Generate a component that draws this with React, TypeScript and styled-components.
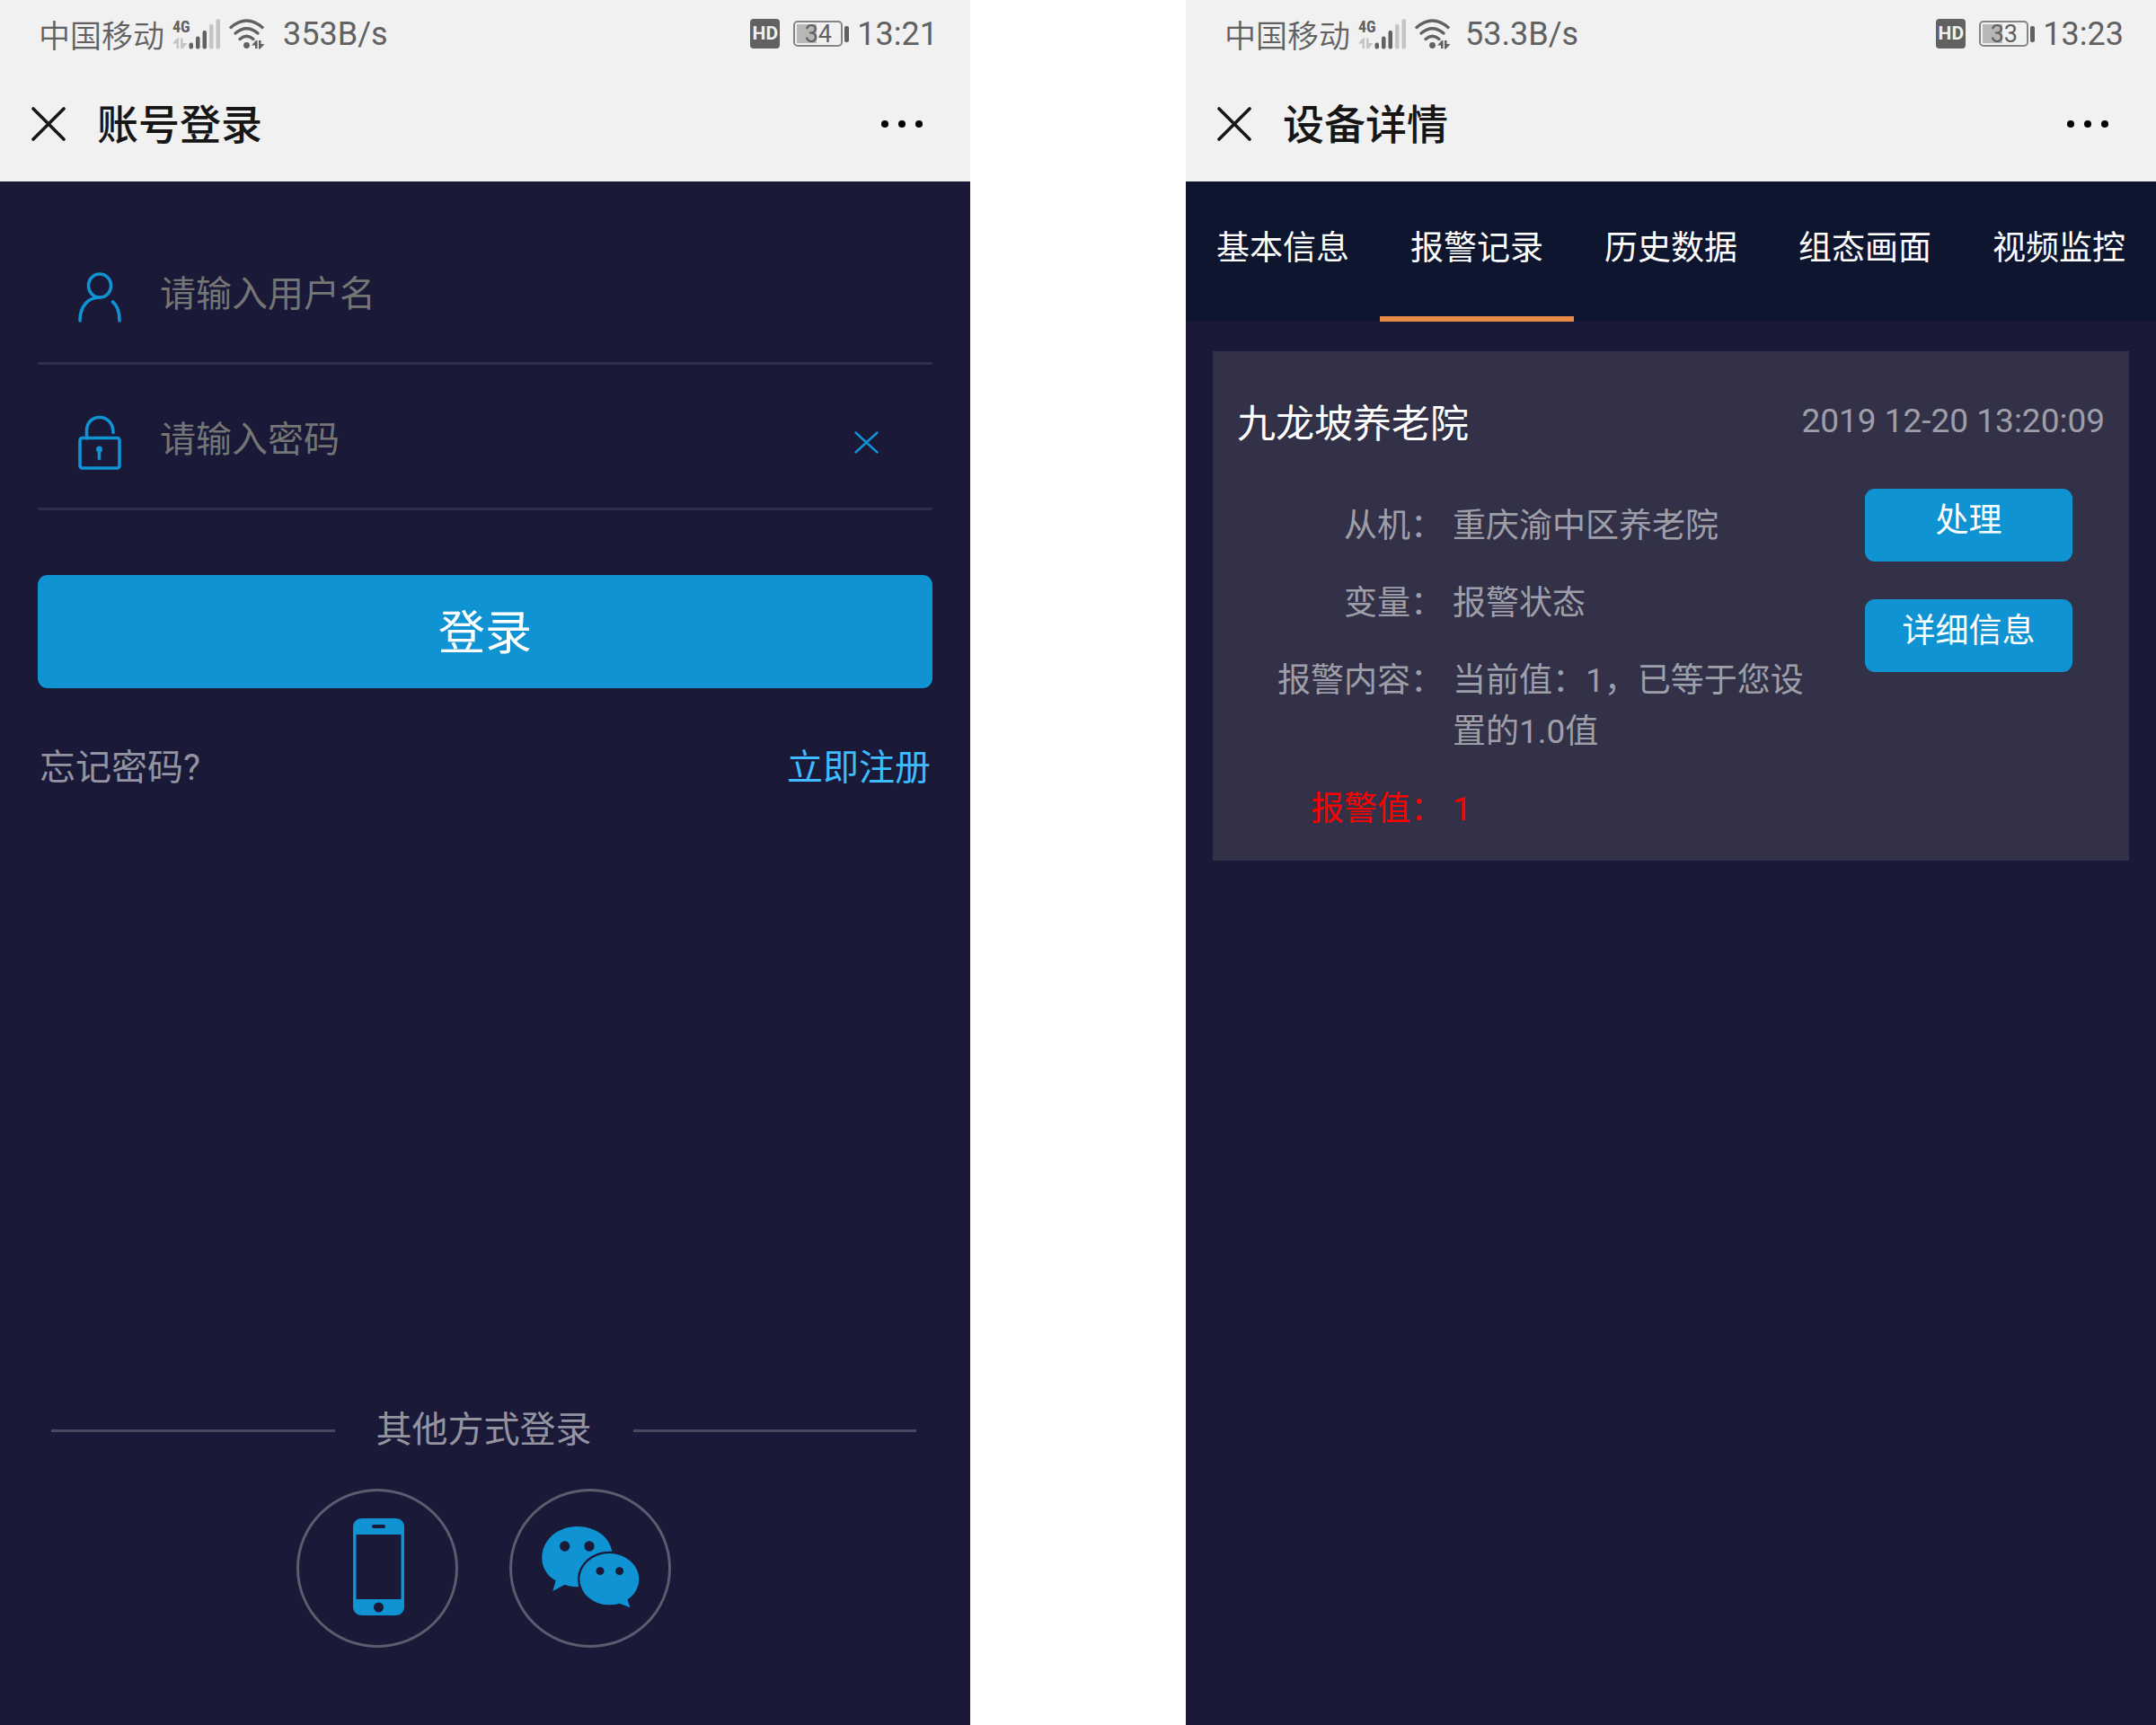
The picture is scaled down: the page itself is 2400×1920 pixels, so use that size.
import React from "react";
import styled, { createGlobalStyle } from "styled-components";

const color = {
  bar: "#f1f1f1",
  status: "#616161",
  faint: "#c5c5c5",
  ink: "#161616",
  screen: "#1a1937",
  tabs: "#0e152e",
  card: "#323148",
  blue: "#0f93d3",
  link: "#3dbdff",
  orange: "#e98948",
  muted: "rgba(255, 255, 255, 0.54)",
};

const GlobalStyle = createGlobalStyle`
  *, *::before, *::after { box-sizing: border-box; }
  body {
    margin: 0;
    background: #fff;
    font-family: Roboto, "Noto Sans CJK SC", sans-serif;
  }
  button, input { font: inherit; color: inherit; border: 0; padding: 0; background: none; }
  button { cursor: pointer; }
  svg { display: block; flex: none; }
  h1, h2, dl, dd { margin: 0; font-weight: 400; }
`;

const Board = styled.div`
  display: flex;
  gap: 10%;
  min-height: 100vh;
`;

const Phone = styled.section`
  flex: 1;
  min-width: 0;
  display: flex;
  flex-direction: column;
  background: ${color.screen};
`;

/* ---------- system status bar ---------- */

const StatusBar = styled.div`
  display: flex;
  align-items: center;
  height: 74px;
  padding: 1px 36px 0 43px;
  background: ${color.bar};
  color: ${color.status};
  font-size: 36px;
  line-height: 42px;
`;

const Carrier = styled.span`
  font-family: "Noto Sans CJK SC", sans-serif;
  font-size: 35px;
  font-weight: 350;
  margin-right: 9px;
`;

const Speed = styled.span`
  margin-left: ${(p: { $gap: number }) => p.$gap}px;
`;

const StatusRight = styled.div`
  display: flex;
  align-items: center;
  margin-left: auto;
`;

const HdBadge = styled.span`
  width: 33px;
  height: 33px;
  margin-right: 15px;
  border-radius: 4px;
  background: ${color.status};
  color: ${color.bar};
  font-size: 21px;
  font-weight: 700;
  line-height: 33px;
  text-align: center;
`;

const Battery = styled.span`
  display: flex;
  align-items: center;
  gap: 2px;
  margin-right: 9px;

  &::after {
    content: "";
    width: 5px;
    height: 18px;
    border-radius: 2px;
    background: ${color.status};
  }
`;

const BatteryCell = styled.span`
  width: 55px;
  height: 29px;
  border: 2px solid #858585;
  border-radius: 5px;
  padding: 2px;
  background: linear-gradient(#b7b7b7, #b7b7b7) 2px 2px / 22px 21px no-repeat;
  font-size: 27px;
  line-height: 22px;
  text-align: center;
`;

const SignalSvg = styled.svg`
  overflow: visible;
`;

function SignalIcon() {
  return (
    <SignalSvg width="54" height="42" viewBox="0 -4 54 42" aria-hidden="true">
      <text
        x="0"
        y="15"
        fill={color.status}
        fontFamily='"Roboto Condensed", "Liberation Sans Narrow", Roboto, sans-serif'
        fontSize="18"
        fontWeight="700"
      >
        4G
      </text>
      <g fill={color.faint}>
        <path d="M0 27.500L5 21.500H7V33H4.500V27.500Z" />
        <path d="M9 21.500H11.500V27H16.500L11.500 33H9Z" />
        <rect x="41" y="6" width="4.500" height="27.500" rx="2" />
        <rect x="48.500" y="0" width="4.500" height="33.500" rx="2" />
      </g>
      <g fill={color.status}>
        <rect x="18.500" y="26.500" width="4.500" height="7" rx="2" />
        <rect x="26" y="19.500" width="4.500" height="14" rx="2" />
        <rect x="33.500" y="13" width="4.500" height="20.500" rx="2" />
      </g>
    </SignalSvg>
  );
}

const WifiSvg = styled.svg`
  margin-left: 9px;
`;

function WifiIcon() {
  return (
    <WifiSvg width="40" height="34" viewBox="0 0 40 34" aria-hidden="true">
      <g fill="none" stroke={color.status} strokeWidth="3.400" strokeLinecap="round">
        <path d="M2 9.500Q19.500 -5.500 37 9.500" />
        <path d="M7 16Q19.500 5.500 32 16" />
        <path d="M12 22.500Q19.500 16 27 22.500" />
      </g>
      <g fill={color.status}>
        <circle cx="19.500" cy="29.500" r="3.400" />
        <path d="M25 29.500L30 24H31.500V33H29V29.500Z" />
        <path d="M33 24H35.500V28H39.500L34.500 33.500H33Z" />
      </g>
    </WifiSvg>
  );
}

/* ---------- title bar ---------- */

const TitleBar = styled.header`
  display: flex;
  align-items: center;
  height: 128px;
  padding: 0 53px 0 35px;
  background: ${color.bar};
  color: ${color.ink};
`;

const Title = styled.h1`
  padding-top: 2px;
  margin-left: 35px;
  font-size: 46px;
  font-weight: 500;
  line-height: 60px;
`;

const MoreButton = styled.button`
  margin-left: auto;
`;

type ChromeProps = { speed: string; speedGap: number; battery: number; time: string; title: string };

function PhoneChrome({ speed, speedGap, battery, time, title }: ChromeProps) {
  return (
    <>
      <StatusBar>
        <Carrier>中国移动</Carrier>
        <SignalIcon />
        <WifiIcon />
        <Speed $gap={speedGap}>{speed}</Speed>
        <StatusRight>
          <HdBadge>HD</HdBadge>
          <Battery>
            <BatteryCell>{battery}</BatteryCell>
          </Battery>
          <span>{time}</span>
        </StatusRight>
      </StatusBar>
      <TitleBar>
        <button type="button" aria-label="关闭">
          <svg width="38" height="38" viewBox="0 0 38 38">
            <path d="M2 2L36 36M36 2L2 36" stroke={color.ink} strokeWidth="3.600" strokeLinecap="round" />
          </svg>
        </button>
        <Title>{title}</Title>
        <MoreButton type="button" aria-label="更多">
          <svg width="46" height="8" viewBox="0 0 46 8">
            <circle cx="4" cy="4" r="4" />
            <circle cx="23" cy="4" r="4" />
            <circle cx="42" cy="4" r="4" />
          </svg>
        </MoreButton>
      </TitleBar>
    </>
  );
}

/* ---------- login screen ---------- */

const LoginForm = styled.form`
  padding: 42px 42px 0;
`;

const Field = styled.div`
  display: flex;
  align-items: center;
  height: 162px;
  padding: 7px 60px 0 45px;
  border-bottom: 3px solid #302e4d;
`;

const FieldInput = styled.input`
  flex: 1;
  min-width: 0;
  height: 60px;
  margin-left: 43px;
  outline: 0;
  color: #fff;
  font-size: 40px;

  &::placeholder {
    color: #757575;
    opacity: 1;
  }
`;

const SubmitButton = styled.button`
  display: block;
  width: 100%;
  height: 126px;
  margin-top: 72px;
  padding-top: 6px;
  border-radius: 11px;
  background: ${color.blue};
  color: #fff;
  font-size: 52px;
  line-height: 60px;
`;

const LinkRow = styled.div`
  display: flex;
  justify-content: space-between;
  margin-top: 59px;
  padding: 0 2px;
  font-size: 40px;
  line-height: 60px;
`;

const TextLink = styled.a<{ $accent?: boolean }>`
  color: ${(p) => (p.$accent ? color.link : color.muted)};
  text-decoration: none;
`;

const OtherLogin = styled.footer`
  margin-top: auto;
  padding: 0 60px 86px 57px;
`;

const OtherTitle = styled.div`
  display: flex;
  align-items: center;
  gap: 46px;
  color: ${color.muted};
  font-size: 40px;
  line-height: 60px;

  &::before,
  &::after {
    content: "";
    flex: 1;
    height: 3px;
    background: #4a495f;
  }
`;

const OtherList = styled.div`
  display: flex;
  justify-content: center;
  gap: 57px;
  margin-top: 35px;
`;

const RoundButton = styled.button`
  display: flex;
  align-items: center;
  justify-content: center;
  width: 180px;
  height: 177px;
  padding-bottom: 3px;
  border: 3px solid #5d5c6e;
  border-radius: 50%;
`;

const iconStroke = { fill: "none", stroke: color.blue, strokeWidth: 3.6, strokeLinecap: "round" as const };

function UserIcon() {
  return (
    <svg width="48" height="68" viewBox="0 -4 48 68" {...iconStroke}>
      <ellipse cx="24" cy="21" rx="12.500" ry="13" />
      <path d="M2 60C2 44 11 34 24 34M38.500 39C43.500 43 46 50 46 60" />
    </svg>
  );
}

function LockIcon() {
  return (
    <svg width="48" height="68" viewBox="0 -4 48 68" {...iconStroke}>
      <path d="M9.500 29V20C9.500 11 16 5.500 24 5.500C32 5.500 39 12 39 22.500" />
      <rect x="2" y="28.500" width="44" height="33.500" rx="2.500" />
      <circle cx="23.500" cy="41" r="3.500" fill={color.blue} stroke="none" />
      <path d="M23.500 41V51.500" />
    </svg>
  );
}

function MobileIcon() {
  return (
    <svg width="59" height="108" viewBox="-2 0 59 108">
      <path
        fill={color.blue}
        fillRule="evenodd"
        d="M9 0H48A9 9 0 0 1 57 9V99A9 9 0 0 1 48 108H9A9 9 0 0 1 0 99V9A9 9 0 0 1 9 0Z
           M3.500 18V90H53.500V18Z
           M23 7A2 2 0 0 0 23 11H34A2 2 0 0 0 34 7Z
           M28.500 93.500A5.500 5.500 0 1 0 28.500 104.500A5.500 5.500 0 1 0 28.500 93.500Z"
      />
    </svg>
  );
}

function WechatIcon() {
  return (
    <svg width="109" height="91" viewBox="0 0 327 273">
      <g fill={color.blue}>
        <path d="M118 0C182 0 229 38 235 85L210 110L122 202C106 202 92 200 77 194L37 216L47 181C16 163 1 136 1 104C1 46 53 0 118 0Z" />
        <ellipse cx="226" cy="176" rx="106" ry="93" fill={color.screen} />
        <ellipse cx="226" cy="176" rx="99" ry="86" />
        <path d="M256 256L295 271L286 243L300 230Z" />
      </g>
      <g fill={color.screen}>
        <circle cx="77" cy="66" r="17" />
        <circle cx="159" cy="66" r="17" />
        <circle cx="195" cy="149" r="13.500" />
        <circle cx="260" cy="149" r="13.500" />
      </g>
    </svg>
  );
}

function LoginScreen() {
  return (
    <Phone>
      <PhoneChrome speed="353B/s" speedGap={20} battery={34} time="13:21" title="账号登录" />
      <LoginForm onSubmit={(e) => e.preventDefault()}>
        <Field>
          <label htmlFor="username" aria-label="用户名">
            <UserIcon />
          </label>
          <FieldInput id="username" type="text" placeholder="请输入用户名" />
        </Field>
        <Field>
          <label htmlFor="password" aria-label="密码">
            <LockIcon />
          </label>
          <FieldInput id="password" type="password" placeholder="请输入密码" />
          <button type="reset" aria-label="清除">
            <svg width="27" height="34" viewBox="0 0 27 34" {...iconStroke} strokeWidth={2.4}>
              <path d="M1.500 9.500L25.500 31.500M25.500 9.500L1.500 31.500" />
            </svg>
          </button>
        </Field>
        <SubmitButton type="submit">登录</SubmitButton>
        <LinkRow>
          <TextLink href="#forgot">忘记密码?</TextLink>
          <TextLink href="#register" $accent>
            立即注册
          </TextLink>
        </LinkRow>
      </LoginForm>
      <OtherLogin>
        <OtherTitle>其他方式登录</OtherTitle>
        <OtherList>
          <RoundButton type="button" aria-label="手机登录">
            <MobileIcon />
          </RoundButton>
          <RoundButton type="button" aria-label="微信登录">
            <WechatIcon />
          </RoundButton>
        </OtherList>
      </OtherLogin>
    </Phone>
  );
}

/* ---------- device detail screen ---------- */

const Tabs = styled.nav`
  display: flex;
  height: 156px;
  background: ${color.tabs};
`;

const Tab = styled.button<{ $active: boolean }>`
  flex: 1;
  padding-bottom: 2px;
  border-bottom: 6px solid ${(p) => (p.$active ? color.orange : "transparent")};
  color: #fff;
  font-size: 37px;
  line-height: 57px;
  white-space: nowrap;
`;

const Card = styled.article`
  margin: 33px 30px 0;
  padding: 49px 27px 29px;
  background: ${color.card};
  color: ${color.muted};
  font-size: 37px;
  line-height: 57px;
`;

const CardHead = styled.div`
  display: flex;
  align-items: flex-start;
  justify-content: space-between;
`;

const CardTitle = styled.h2`
  color: #fff;
  font-size: 43px;
  line-height: 64px;
`;

const CardBody = styled.div`
  display: flex;
  align-items: flex-start;
  gap: 40px;
  margin-top: 40px;
  padding-right: 36px;
`;

const Details = styled.dl`
  flex: 1;
  display: grid;
  grid-template-columns: 230px 1fr;
  column-gap: 10px;
  row-gap: 29px;
  padding-top: 13px;
`;

const Term = styled.dt<{ $alarm?: boolean }>`
  text-align: right;
  color: ${(p) => (p.$alarm ? "#ff0000" : "inherit")};
`;

const Value = styled.dd<{ $alarm?: boolean }>`
  color: ${(p) => (p.$alarm ? "#ff0000" : "inherit")};
`;

const Actions = styled.div`
  display: flex;
  flex-direction: column;
  gap: 42px;
`;

const ActionButton = styled.button`
  width: 231px;
  height: 81px;
  padding-bottom: 10px;
  border-radius: 11px;
  background: ${color.blue};
  color: #fff;
`;

const tabs = ["基本信息", "报警记录", "历史数据", "组态画面", "视频监控"];

const rows = [
  { term: "从机：", value: "重庆渝中区养老院" },
  { term: "变量：", value: "报警状态" },
  { term: "报警内容：", value: "当前值：1，已等于您设置的1.0值" },
  { term: "报警值：", value: "1", alarm: true },
];

function DeviceScreen() {
  const [active, setActive] = React.useState(1);
  return (
    <Phone>
      <PhoneChrome speed="53.3B/s" speedGap={16} battery={33} time="13:23" title="设备详情" />
      <Tabs>
        {tabs.map((name, i) => (
          <Tab key={name} type="button" $active={i === active} onClick={() => setActive(i)}>
            {name}
          </Tab>
        ))}
      </Tabs>
      <Card>
        <CardHead>
          <CardTitle>九龙坡养老院</CardTitle>
          <time>2019 12-20 13:20:09</time>
        </CardHead>
        <CardBody>
          <Details>
            {rows.map((row) => (
              <React.Fragment key={row.term}>
                <Term $alarm={row.alarm}>{row.term}</Term>
                <Value $alarm={row.alarm}>{row.value}</Value>
              </React.Fragment>
            ))}
          </Details>
          <Actions>
            <ActionButton type="button">处理</ActionButton>
            <ActionButton type="button">详细信息</ActionButton>
          </Actions>
        </CardBody>
      </Card>
    </Phone>
  );
}

export default function App() {
  return (
    <>
      <GlobalStyle />
      <Board lang="zh-CN">
        <LoginScreen />
        <DeviceScreen />
      </Board>
    </>
  );
}
